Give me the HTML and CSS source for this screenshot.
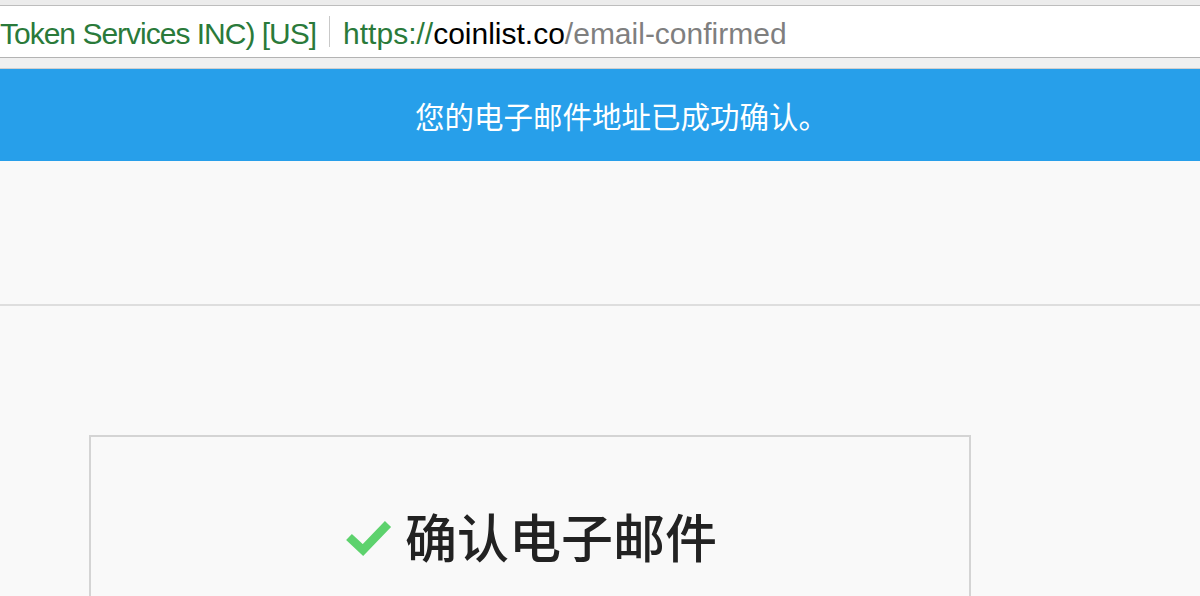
FILE: index.html
```html
<!DOCTYPE html>
<html lang="zh">
<head>
<meta charset="utf-8">
<title>Email confirmed</title>
<link rel="stylesheet" href="styles.css">
</head>
<body>
<div class="chrome">
  <div class="tabstrip"></div>
  <div class="addressbar">
    <span class="identity">Token Services INC) [US]</span>
    <span class="sep"></span>
    <span class="url"><span class="scheme">https://</span><span class="host">coinlist.co</span><span class="path">/email-confirmed</span></span>
  </div>
  <div class="toolbar-bottom"></div>
</div>
<div class="flash">您的电子邮件地址已成功确认。</div>
<div class="page">
  <div class="header-area"></div>
  <div class="content">
    <div class="card">
      <h1 class="card-title">
        <svg class="check" width="48" height="42" viewBox="0 0 48 42">
          <polyline points="4,22 18,35 43,9" fill="none" stroke="#5dd26d" stroke-width="8.5" stroke-linejoin="miter" stroke-linecap="butt"/>
        </svg>
        <span>确认电子邮件</span>
      </h1>
    </div>
  </div>
</div>
</body>
</html>
```
FILE: styles.css
```css
html, body {
  margin: 0;
  padding: 0;
  background: #f9f9f9;
  overflow: hidden;
}
.chrome {
  background: #ffffff;
}
.tabstrip {
  height: 5px;
  background: #ececec;
  border-bottom: 1px solid #bdbdbd;
}
.addressbar {
  height: 47px;
  padding-top: 4px;
  background: #ffffff;
  border-bottom: 1px solid #b3b3b3;
  display: flex;
  align-items: center;
  overflow: hidden;
  white-space: nowrap;
  font-family: "Liberation Sans", Arial, sans-serif;
  font-size: 30px;
}
.identity {
  color: #2a7a3a;
  letter-spacing: -1px;
}
.sep {
  width: 1px;
  height: 31px;
  background: #c9c9c9;
  margin: -4px 13px 0 13px;
}
.scheme { color: #2a7a3a; }
.host { color: #000000; }
.path { color: #7f7f7f; }
.toolbar-bottom {
  height: 10px;
  background: #f0f0f0;
  border-bottom: 1px solid #cfcfcf;
}
.flash {
  height: 92px;
  padding-left: 43px;
  background: #279fea;
  color: #ffffff;
  display: flex;
  align-items: center;
  justify-content: center;
  font-family: "Noto Sans CJK SC", "Noto Sans", sans-serif;
  font-size: 29.5px;
}
.page {
  background: #f9f9f9;
}
.header-area {
  height: 143px;
  border-bottom: 2px solid #dedede;
}
.content {
  padding: 129px 0 0 89px;
}
.card {
  width: 878px;
  height: 300px;
  border: 2px solid #d4d4d4;
  background: #f9f9f9;
}
.card-title {
  margin: 61px 0 0;
  padding-left: 2px;
  display: flex;
  align-items: center;
  justify-content: center;
  gap: 12px;
  font-family: "Noto Sans CJK SC", "Noto Sans", sans-serif;
  font-size: 52px;
  font-weight: 500;
  color: #222222;
  line-height: 76px;
}
.check {
  display: block;
}
```
